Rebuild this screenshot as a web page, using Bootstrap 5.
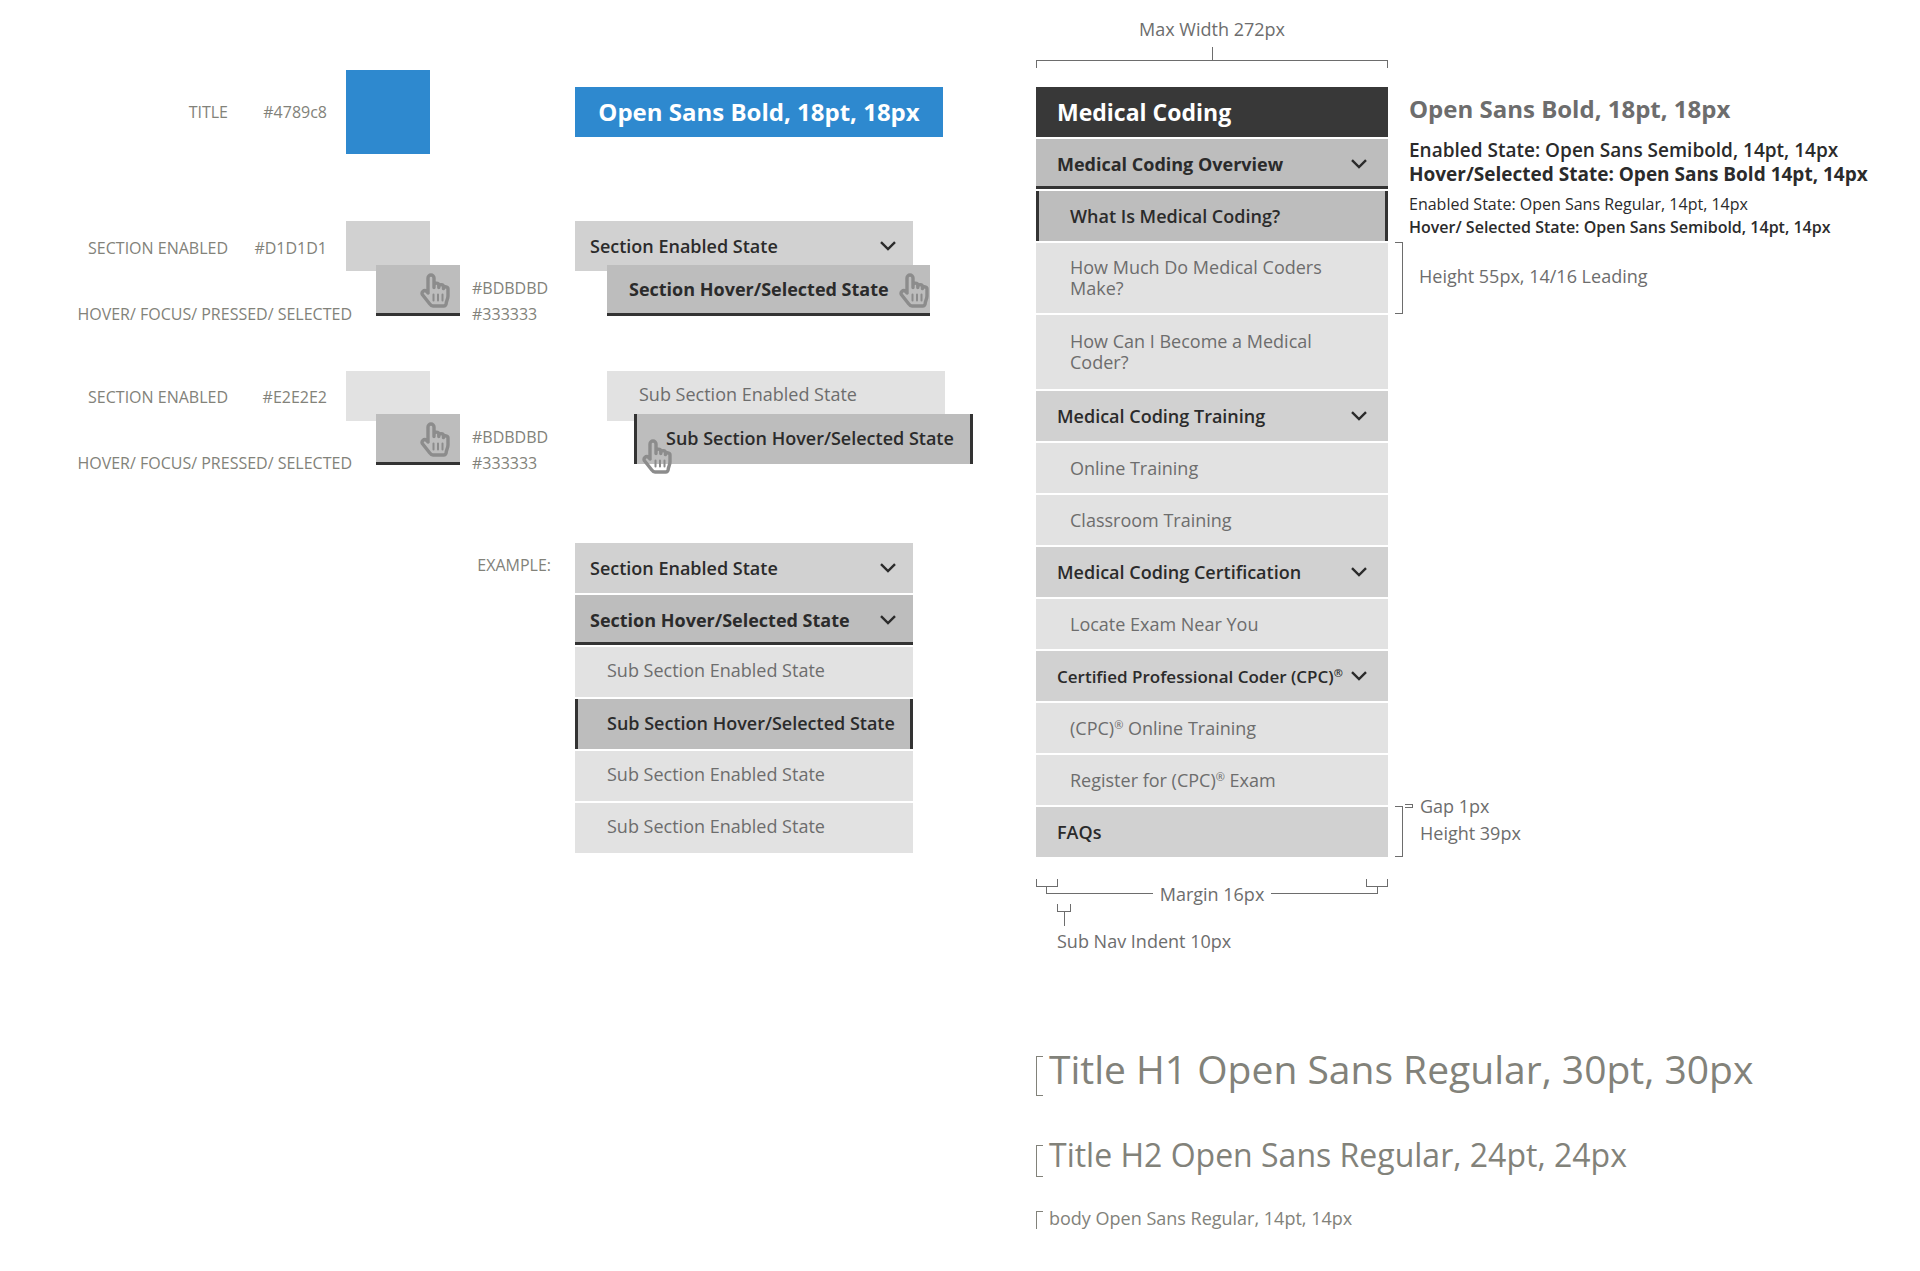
<!DOCTYPE html>
<html lang="en">
<head>
<meta charset="utf-8">
<meta name="viewport" content="width=device-width, initial-scale=1">
<title>Side navigation style guide</title>
<link href="https://cdn.jsdelivr.net/npm/bootstrap@5.3.0/dist/css/bootstrap.min.css" rel="stylesheet">
<style>
  body { font-family: "Open Sans", "Liberation Sans", sans-serif; font-size: 18px; line-height: 22px; color: #6d6d6d; background: #fff; }

  .sheet { display: grid; grid-template-columns: 1036fr 884fr; }
  .states { padding-top: 70px; }
  .spec-row { display: grid; grid-template-columns: 575fr 461fr; }
  .row-title { align-items: center; margin-bottom: 67px; }
  .row-section { min-height: 106px; margin-bottom: 44px; }
  .row-subsection { min-height: 105px; margin-bottom: 67px; }

  /* colour legend on the left */
  .legend { font-size: 16px; line-height: 26px; color: #82827a; }
  .legend-text { padding-top: 14px; }
  .row-subsection .legend-text { padding-top: 13px; }
  .hex-cell { flex: none; width: 118px; padding-right: 19px; text-align: right; }
  .state-name { margin-right: -6px; }
  .swatches { flex: none; width: 114px; }
  .swatch { width: 84px; height: 50px; }
  .swatch-title { height: 84px; background: #2e89cf; }
  .swatch-hover { margin: -6px 0 0 30px; height: 51px; }
  .row-subsection .swatch-hover { margin-top: -7px; }
  .hex-after { flex: none; width: 115px; padding-left: 12px; }
  .example-label { padding: 9px 24px 0 0; }

  /* navigation pieces */
  .bar-title { height: 50px; padding: 0 21px; font-size: 23px; line-height: 30px; font-weight: 700; color: #fff; background: #383838; }
  .bar-blue { max-width: 368px; font-size: 24px; background: #2e89cf; }
  .item { display: flex; align-items: center; justify-content: space-between; width: 100%; height: 50px; padding: 0 21px; border: 0; font-size: 18px; line-height: 21px; text-align: left; text-decoration: none; }
  .item-section { color: #2b2b2b; background: #d1d1d1; font-weight: 600; white-space: nowrap; }
  .item-long { font-size: 17px; }
  .item-sub { padding-left: 34px; color: #6d6d6d; background: #e2e2e2; }
  .item-section.is-on { font-weight: 700; background: #bdbdbd; box-shadow: inset 0 -3px #333; }
  .item-sub.is-on { padding-left: 31px; color: #2b2b2b; font-weight: 600; background: #bdbdbd; border: solid #333; border-width: 0 3px; }
  .on-fill { background: #bdbdbd; border-bottom: 3px solid #333; }
  .enabled-fill { background: #d1d1d1; }
  .sub-fill { background: #e2e2e2; }
  .item sup { font-size: 11px; top: -6px; line-height: 0; }
  .chev { width: 16px; height: 10px; flex: none; fill: none; stroke: #2b2b2b; stroke-width: 2.4; }
  .menu { display: flex; flex-direction: column; gap: 2px; max-width: 352px; }
  .two-line { height: 70px; padding-right: 60px; }
  .two-line-tall { height: 74px; padding-right: 60px; }

  .demo { max-width: 338px; }
  .demo .item { padding: 0 17px 0 15px; }
  .demo .item-sub { padding: 0 0 4px 32px; }
  .demo .item-sub.is-on { padding: 0 0 2px 29px; white-space: nowrap; }
  .demo-over { margin: -6px 0 0 32px; max-width: 323px; }
  .demo-over .item { height: 51px; padding: 0 22px 3px; }
  .demo-indent { margin-left: 32px; }
  .demo-sub-over { margin: -7px 0 0 59px; max-width: 339px; }

  .hand { position: absolute; width: 30px; height: 35px; fill: none; stroke: #8c8c8c; stroke-width: 3.4; stroke-linecap: round; stroke-linejoin: round; }
  .hand-swatch { right: 10px; top: 8px; }
  .hand-section { right: 1px; top: 8px; }
  .hand-sub { left: 8px; top: 25px; }

  /* measurements */
  .guide { padding-top: 18px; }
  .measure { max-width: 352px; }
  .tick { width: 1px; height: 13px; margin-top: 7px; background: #6d6d6d; }
  .rule-top { height: 8px; margin-bottom: 19px; border: solid #6d6d6d; border-width: 1px 1px 0; }
  .rule-right { width: 8px; border: solid #6d6d6d; border-width: 1px 1px 1px 0; }
  .rule-left { width: 7px; margin-bottom: -1px; border: solid #82827a; border-width: 1px 0 1px 1px; }
  .rule-h1 { height: 40px; }
  .rule-h2 { height: 32px; }
  .rule-body { height: 19px; }
  .cups { margin-top: 22px; }
  .cup { width: 22px; height: 8px; border: solid #6d6d6d; border-width: 0 1px 1px; }
  .arm { height: 8px; flex: 1; border: 0 solid #6d6d6d; border-bottom-width: 1px; }
  .arm-start { border-left-width: 1px; }
  .arm-end { border-right-width: 1px; }
  .margin-line { gap: 7px; margin: -1px 10px 0; height: 18px; line-height: 16px; }
  .indent-mark { width: 14px; margin-left: 21px; }
  .indent-mark .cup { width: 14px; }
  .indent-mark .tick { height: 14px; margin-top: 0; }
  .indent-text { padding: 4px 0 1px 21px; }

  .notes { padding: 75px 0 0 7px; }
  .note-fonts { padding-left: 14px; margin-bottom: 3px; color: #2b2b2b; }
  .note-title { font-size: 24px; line-height: 32px; font-weight: 700; color: #6d6d6d; margin-bottom: 13px; }
  .note-line { font-size: 19px; line-height: 24px; }
  .note-small { font-size: 16px; line-height: 23px; }
  .note-gap { margin-top: 7px; }
  .tall-rule { height: 72px; }
  .row-rule { height: 51px; margin-top: 13px; }
  .gap-mark { width: 8px; height: 4px; margin: 11px 7px 0 2px; border: solid #6d6d6d; border-width: 1px 1px 1px 0; }
  .dims { margin-top: 479px; line-height: 27px; }

  .titles { margin-top: 90px; color: #82827a; }
  .title-row { display: flex; align-items: flex-end; gap: 6px; }
  .type-h1 { font-size: 39px; line-height: 52px; margin: 0; font-weight: 400; }
  .type-h2 { font-size: 32px; line-height: 42px; margin: 0; font-weight: 400; }
  .title-h2 { margin: 39px 0 31px; }
</style>
</head>
<body>
<svg class="d-none" xmlns="http://www.w3.org/2000/svg">
  <symbol id="chev" viewBox="0 0 16 10"><path d="M1 1.200 8 8l7-6.800"/></symbol>
  <symbol id="hand" viewBox="0 0 30 35">
    <path d="M8 20V5a3 3 0 0 1 6 0v8.500M14 14.500v-2a2.300 2.300 0 0 1 4.800 0v2M18.800 14a2.300 2.300 0 0 1 4.700 0v1.500M23.500 15.500a2.300 2.300 0 0 1 4.500.8v6.700c0 3-1.800 5-1.800 7.500a2.500 2.500 0 0 1-2.500 2.500H13c-1.500 0-2.300-.7-3-1.800L2.500 21.800a2.700 2.700 0 0 1 4-3.500L8 20"/>
    <path stroke-width="2" d="M13.500 21.500v6M18 21.500v6M22.500 21.500v6"/>
  </symbol>
</svg>

<main class="sheet">
  <section class="states">
    <div class="spec-row row-title">
      <div class="legend d-flex justify-content-end align-items-center">
        <span>TITLE</span><span class="hex-cell">#4789c8</span>
        <div class="swatches"><div class="swatch swatch-title"></div></div>
        <span class="hex-after"></span>
      </div>
      <div class="bar-title bar-blue d-flex align-items-center justify-content-center">Open Sans Bold, 18pt, 18px</div>
    </div>

    <div class="spec-row row-section">
      <div class="legend d-flex justify-content-end">
        <div class="legend-text d-flex flex-column justify-content-between text-end">
          <div class="d-flex justify-content-end"><span>SECTION ENABLED</span><span class="hex-cell">#D1D1D1</span></div>
          <div class="state-name">HOVER/ FOCUS/ PRESSED/ SELECTED</div>
        </div>
        <div class="swatches">
          <div class="swatch enabled-fill"></div>
          <div class="swatch swatch-hover on-fill position-relative"><svg class="hand hand-swatch"><use href="#hand"/></svg></div>
        </div>
        <div class="hex-after d-flex flex-column justify-content-end"><span>#BDBDBD</span><span>#333333</span></div>
      </div>
      <div>
        <div class="demo"><button type="button" class="item item-section">Section Enabled State<svg class="chev"><use href="#chev"/></svg></button></div>
        <div class="demo-over position-relative"><button type="button" class="item item-section is-on">Section Hover/Selected State</button><svg class="hand hand-section"><use href="#hand"/></svg></div>
      </div>
    </div>

    <div class="spec-row row-subsection">
      <div class="legend d-flex justify-content-end">
        <div class="legend-text d-flex flex-column justify-content-between text-end">
          <div class="d-flex justify-content-end"><span>SECTION ENABLED</span><span class="hex-cell">#E2E2E2</span></div>
          <div class="state-name">HOVER/ FOCUS/ PRESSED/ SELECTED</div>
        </div>
        <div class="swatches">
          <div class="swatch sub-fill"></div>
          <div class="swatch swatch-hover on-fill position-relative"><svg class="hand hand-swatch"><use href="#hand"/></svg></div>
        </div>
        <div class="hex-after d-flex flex-column justify-content-end"><span>#BDBDBD</span><span>#333333</span></div>
      </div>
      <div>
        <div class="demo demo-indent"><a href="#" class="item item-sub">Sub Section Enabled State</a></div>
        <div class="demo demo-sub-over position-relative"><a href="#" class="item item-sub is-on">Sub Section Hover/Selected State</a><svg class="hand hand-sub"><use href="#hand"/></svg></div>
      </div>
    </div>

    <div class="spec-row">
      <div class="legend example-label text-end">EXAMPLE:</div>
      <nav class="menu demo w-100" aria-label="Example">
        <button type="button" class="item item-section">Section Enabled State<svg class="chev"><use href="#chev"/></svg></button>
        <button type="button" class="item item-section is-on">Section Hover/Selected State<svg class="chev"><use href="#chev"/></svg></button>
        <a href="#" class="item item-sub">Sub Section Enabled State</a>
        <a href="#" class="item item-sub is-on">Sub Section Hover/Selected State</a>
        <a href="#" class="item item-sub">Sub Section Enabled State</a>
        <a href="#" class="item item-sub">Sub Section Enabled State</a>
      </nav>
    </div>
  </section>

  <section class="guide">
    <div class="d-flex">
      <div class="measure w-100">
        <div class="text-center">Max Width 272px</div>
        <div class="tick mx-auto"></div>
        <div class="rule-top"></div>
        <nav class="menu" aria-label="Medical Coding">
          <div class="bar-title d-flex align-items-center">Medical Coding</div>
          <button type="button" class="item item-section is-on">Medical Coding Overview<svg class="chev"><use href="#chev"/></svg></button>
          <a href="#" class="item item-sub is-on">What Is Medical Coding?</a>
          <a href="#" class="item item-sub two-line">How Much Do Medical Coders Make?</a>
          <a href="#" class="item item-sub two-line-tall">How Can I Become a Medical Coder?</a>
          <button type="button" class="item item-section">Medical Coding Training<svg class="chev"><use href="#chev"/></svg></button>
          <a href="#" class="item item-sub">Online Training</a>
          <a href="#" class="item item-sub">Classroom Training</a>
          <button type="button" class="item item-section">Medical Coding Certification<svg class="chev"><use href="#chev"/></svg></button>
          <a href="#" class="item item-sub">Locate Exam Near You</a>
          <button type="button" class="item item-section item-long"><span>Certified Professional Coder (CPC)<sup>®</sup></span><svg class="chev"><use href="#chev"/></svg></button>
          <a href="#" class="item item-sub"><span>(CPC)<sup>®</sup> Online Training</span></a>
          <a href="#" class="item item-sub"><span>Register for (CPC)<sup>®</sup> Exam</span></a>
          <a href="#" class="item item-section">FAQs</a>
        </nav>
        <div class="cups d-flex justify-content-between"><div class="cup"></div><div class="cup"></div></div>
        <div class="margin-line d-flex">
          <div class="arm arm-start"></div><span>Margin 16px</span><div class="arm arm-end"></div>
        </div>
        <div class="indent-mark"><div class="cup"></div><div class="tick mx-auto"></div></div>
        <div class="indent-text">Sub Nav Indent 10px</div>
      </div>

      <div class="notes">
        <div class="note-fonts">
          <div class="note-title">Open Sans Bold, 18pt, 18px</div>
          <div class="note-line fw-semibold">Enabled State: Open Sans Semibold, 14pt, 14px</div>
          <div class="note-line fw-bold">Hover/Selected State: Open Sans Bold 14pt, 14px</div>
          <div class="note-small note-gap">Enabled State: Open Sans Regular, 14pt, 14px</div>
          <div class="note-small fw-semibold">Hover/ Selected State: Open Sans Semibold, 14pt, 14px</div>
        </div>
        <div class="d-flex align-items-center"><div class="rule-right tall-rule"></div><span class="ps-3 pb-1">Height 55px, 14/16 Leading</span></div>
        <div class="dims d-flex align-items-start"><div class="rule-right row-rule"></div><div class="gap-mark"></div><div>Gap 1px<br>Height 39px</div></div>
      </div>
    </div>

    <div class="titles">
      <div class="title-row"><div class="rule-left rule-h1"></div><h1 class="type-h1">Title H1 Open Sans Regular, 30pt, 30px</h1></div>
      <div class="title-row title-h2"><div class="rule-left rule-h2"></div><h2 class="type-h2">Title H2 Open Sans Regular, 24pt, 24px</h2></div>
      <div class="title-row"><div class="rule-left rule-body"></div><span>body Open Sans Regular, 14pt, 14px</span></div>
    </div>
  </section>
</main>
<script src="https://cdn.jsdelivr.net/npm/bootstrap@5.3.0/dist/js/bootstrap.bundle.min.js"></script>
</body>
</html>
